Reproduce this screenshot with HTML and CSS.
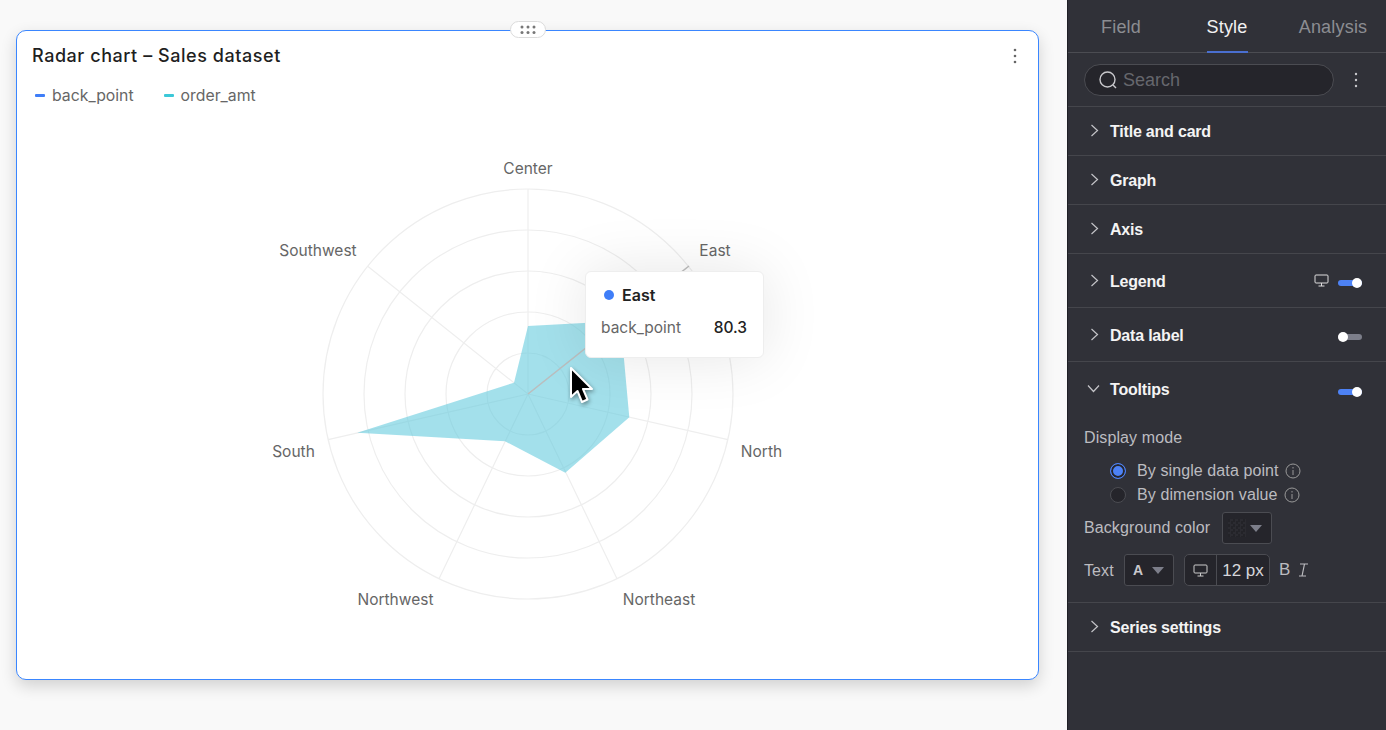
FILE: index.html
```html
<!DOCTYPE html>
<html lang="en">
<head>
<meta charset="utf-8">
<title>Radar chart</title>
<link rel="stylesheet" href="styles.css">
</head>
<body>
<main class="canvas">
  <section class="card">
    <div class="handle"><svg width="16" height="10" viewBox="0 0 16 10"><g fill="#777"><circle cx="2" cy="2" r="1.5"/><circle cx="8" cy="2" r="1.5"/><circle cx="14" cy="2" r="1.5"/><circle cx="2" cy="7.500" r="1.5"/><circle cx="8" cy="7.500" r="1.5"/><circle cx="14" cy="7.500" r="1.5"/></g></svg></div>
    <header class="card-head">
      <h1 class="card-title">Radar chart – Sales dataset</h1>
      <svg class="kebab" width="4" height="16" viewBox="0 0 4 16"><g fill="#666"><circle cx="2" cy="2" r="1.3"/><circle cx="2" cy="8" r="1.3"/><circle cx="2" cy="14" r="1.3"/></g></svg>
    </header>
    <div class="legend">
      <span class="legend-item"><i class="dash dash-blue"></i>back_point</span>
      <span class="legend-item"><i class="dash dash-cyan"></i>order_amt</span>
    </div>
    <svg class="radar" width="1021" height="569" viewBox="17 110 1021 569">
      <g fill="none" stroke="#eeeeee" stroke-width="1.2">
        <circle cx="528" cy="394" r="41"/>
        <circle cx="528" cy="394" r="82"/>
        <circle cx="528" cy="394" r="123"/>
        <circle cx="528" cy="394" r="164"/>
        <circle cx="528" cy="394" r="205"/>
        <path d="M528 394V189M528 394L688.3 266.2M528 394L727.9 439.6M528 394L617 578.7M528 394L439 578.7M528 394L328.1 439.6M528 394L367.7 266.2"/>
      </g>
      <polygon class="area" points="528,326 620.5,321 629.3,417.3 565.3,472.7 505,441.3 357.3,432.7 514,382.7"/>
      <path d="M528 394L689 266" stroke="#bdbdbd" stroke-width="1.4" fill="none"/>
      <g class="axis-label" text-anchor="middle">
        <text x="528" y="174">Center</text>
        <text x="715" y="256">East</text>
        <text x="761.500" y="456.500">North</text>
        <text x="659" y="604.500">Northeast</text>
        <text x="395.500" y="604.500">Northwest</text>
        <text x="293.500" y="456.500">South</text>
        <text x="318" y="256">Southwest</text>
      </g>
    </svg>
    <div class="tooltip">
      <div class="tip-head"><i class="tip-dot"></i>East</div>
      <div class="tip-row"><span>back_point</span><b>80.3</b></div>
    </div>
    <svg class="cursor" width="28" height="40" viewBox="0 0 28 40"><path d="M3 2V31L9.500 25L14 36L19.500 33.500L15 23H24Z" fill="#000" stroke="#fff" stroke-width="2" stroke-linejoin="round"/></svg>
  </section>
</main>
<aside class="panel">
  <nav class="tabs">
    <span class="tab">Field</span>
    <span class="tab tab-on">Style</span>
    <span class="tab">Analysis</span>
  </nav>
  <div class="search-row">
    <div class="search">
      <svg width="20" height="20" viewBox="0 0 20 20" fill="none" stroke="#c8c8cc" stroke-width="1.4"><circle cx="9.500" cy="9.500" r="7.500"/><path d="M15 15L18 18"/></svg>
      <span class="search-text">Search</span>
    </div>
    <svg width="4" height="16" viewBox="0 0 4 16"><g fill="#c8c8cc"><circle cx="2" cy="2" r="1.2"/><circle cx="2" cy="8" r="1.2"/><circle cx="2" cy="14" r="1.200"/></g></svg>
  </div>
  <div class="row"><svg class="chev" width="9" height="13" viewBox="0 0 9 13"><path d="M1.500 1L7.500 6.500L1.500 12"/></svg><span class="row-title">Title and card</span></div>
  <div class="row"><svg class="chev" width="9" height="13" viewBox="0 0 9 13"><path d="M1.500 1L7.500 6.500L1.500 12"/></svg><span class="row-title">Graph</span></div>
  <div class="row"><svg class="chev" width="9" height="13" viewBox="0 0 9 13"><path d="M1.500 1L7.500 6.500L1.500 12"/></svg><span class="row-title">Axis</span></div>
  <div class="row row-tall"><svg class="chev" width="9" height="13" viewBox="0 0 9 13"><path d="M1.500 1L7.500 6.500L1.500 12"/></svg><span class="row-title">Legend</span>
    <svg class="monitor" width="15" height="13" viewBox="0 0 15 13" fill="none" stroke="#ddd" stroke-width="1"><rect x="1" y="1" width="13" height="8" rx="1"/><path d="M7.500 9V12M4.500 12H10.500"/></svg>
    <span class="toggle toggle-on"></span></div>
  <div class="row row-tall"><svg class="chev" width="9" height="13" viewBox="0 0 9 13"><path d="M1.500 1L7.500 6.500L1.500 12"/></svg><span class="row-title">Data label</span><span class="toggle toggle-off"></span></div>
  <div class="group">
    <div class="row-open"><svg class="chev chev-down" width="13" height="9" viewBox="0 0 13 9"><path d="M1 1.500L6.500 7.500L12 1.500"/></svg><span class="row-title">Tooltips</span><span class="toggle toggle-on"></span></div>
    <div class="group-body">
      <div class="field-label">Display mode</div>
      <div class="radios">
        <div class="radio-row"><i class="radio radio-on"></i>By single data point<svg class="info" width="16" height="16" viewBox="0 0 16 16" fill="none" stroke="#999" stroke-width="1"><circle cx="8" cy="8" r="7"/><path d="M8 7V12M8 4V5.500"/></svg></div>
        <div class="radio-row"><i class="radio"></i>By dimension value<svg class="info" width="16" height="16" viewBox="0 0 16 16" fill="none" stroke="#999" stroke-width="1"><circle cx="8" cy="8" r="7"/><path d="M8 7V12M8 4V5.500"/></svg></div>
      </div>
      <div class="bg-row"><span class="field-label">Background color</span><span class="select select-bg"><i class="swatch"></i><i class="caret"></i></span></div>
      <div class="text-row">
        <span class="field-label">Text</span>
        <span class="select select-text"><b class="a-glyph">A</b><i class="caret"></i></span>
        <span class="size-box"><span class="size-icon"><svg width="15" height="13" viewBox="0 0 15 13" fill="none" stroke="#ccc" stroke-width="1"><rect x="1" y="1" width="13" height="8" rx="1"/><path d="M7.500 9V12M4.500 12H10.500"/></svg></span><span class="size-val">12 px</span></span>
        <span class="fmt fmt-b">B</span>
        <svg class="fmt-i" width="11" height="14" viewBox="0 0 11 14" fill="none" stroke="#bcbcc0" stroke-width="1.200"><path d="M2 1H10M1 13H8M6.500 1L4 13"/></svg>
      </div>
    </div>
  </div>
  <div class="row"><svg class="chev" width="9" height="13" viewBox="0 0 9 13"><path d="M1.500 1L7.500 6.500L1.500 12"/></svg><span class="row-title">Series settings</span></div>
</aside>
</body>
</html>
```
FILE: styles.css
```css
* { box-sizing: border-box; }
html, body { height: 100%; }
body {
  margin: 0;
  display: flex;
  height: 730px;
  overflow: hidden;
  background: #f9f9f9;
  font-family: Inter, "Liberation Sans", sans-serif;
}
.canvas { width: 1067px; flex: none; padding: 30px 28px 50px 16px; }
.card {
  position: relative;
  height: 650px;
  background: #fff;
  border: 1px solid #3a86ff;
  border-radius: 10px;
  box-shadow: 0 6px 16px rgba(0, 0, 0, .16);
}
.handle {
  position: absolute;
  left: 493px;
  top: -10px;
  width: 36px;
  height: 17px;
  display: flex;
  align-items: center;
  justify-content: center;
  background: #fff;
  border: 1px solid #dcdcdc;
  border-radius: 9px;
}
.card-head {
  height: 49px;
  padding: 0 21px 0 15px;
  display: flex;
  align-items: center;
  justify-content: space-between;
}
.card-title { margin: 0; font-size: 18px; font-weight: 500; letter-spacing: .55px; color: #1f1f1f; }
.kebab { display: block; }
.legend { height: 30px; padding-left: 18px; display: flex; align-items: center; gap: 30px; }
.legend-item { display: flex; align-items: center; gap: 7px; font-size: 15.800px; color: #666; }
.dash { width: 10px; height: 3px; border-radius: 1px; }
.dash-blue { background: #3f7ef8; }
.dash-cyan { background: #3cc8d8; }
.radar { display: block; }
.area { fill: #61c9dc; fill-opacity: .58; }
.axis-label { font-size: 15.500px; fill: #666; }
.tooltip {
  position: absolute;
  left: 568px;
  top: 240px;
  width: 179px;
  height: 87px;
  padding: 12px 16px 0 15px;
  background: #fff;
  border: 1px solid #eee;
  border-radius: 6px;
  box-shadow: 0 0 60px rgba(0, 0, 0, .1);
}
.tip-head { display: flex; align-items: center; height: 22px; padding-left: 3px; gap: 8px; font-size: 16px; font-weight: 600; color: #222; }
.tip-dot { width: 10px; height: 10px; border-radius: 50%; background: #3f7ef8; }
.tip-row { display: flex; justify-content: space-between; align-items: center; height: 22px; margin-top: 10px; font-size: 15.500px; color: #666; }
.tip-row b { font-weight: 500; color: #222; }
.cursor { position: absolute; left: 551px; top: 335px; filter: drop-shadow(1px 2px 2px rgba(0, 0, 0, .4)); }

.panel {
  width: 319px;
  flex: none;
  height: 730px;
  background: #303138;
  border-left: 1px solid #1f2026;
  font-family: "Liberation Sans", Arial, sans-serif;
}
.tabs { display: flex; height: 53px; border-bottom: 1px solid #4b4c52; }
.tab {
  flex: 1;
  display: flex;
  align-items: center;
  justify-content: center;
  padding-top: 2px;
  font-size: 18px;
  letter-spacing: .2px;
  color: #8c8d92;
  position: relative;
}
.tab-on { color: #f2f2f2; }
.tab-on::after {
  content: "";
  position: absolute;
  left: 33px;
  width: 41px;
  bottom: -1px;
  height: 2px;
  background: #4a6fd0;
}
.search-row {
  height: 54px;
  padding: 0 28px 0 16px;
  display: flex;
  align-items: center;
  justify-content: space-between;
  border-bottom: 1px solid #45464c;
}
.search {
  width: 250px;
  height: 32px;
  display: flex;
  align-items: center;
  gap: 5px;
  padding-left: 13px;
  background: #25252b;
  border: 1px solid #4b4c52;
  border-radius: 16px;
  font-size: 18px;
  color: #66676d;
}
.search-text { padding-top: 2px; }
.row, .row-open {
  display: flex;
  align-items: center;
  height: 49px;
  padding: 0 24px 0 22px;
  border-bottom: 1px solid #45464c;
}
.row-tall { height: 54px; }
.row-open { height: 54px; border-bottom: 0; padding-left: 19px; }
.chev { flex: none; fill: none; stroke: #c4c4c8; stroke-width: 1.200; margin-top: -1px; }
.row-title { margin-left: 11px; flex: 1; padding-top: 2px; font-size: 16px; letter-spacing: -.2px; font-weight: 700; color: #f4f4f4; }
.row-open .row-title { margin-left: 10px; }
.monitor { margin-right: 9px; }
.toggle { position: relative; width: 24px; height: 6px; border-radius: 3px; margin-top: 5px; }
.toggle::after {
  content: "";
  position: absolute;
  top: -2px;
  width: 10px;
  height: 10px;
  border-radius: 50%;
  background: #fff;
}
.toggle-on { background: #4d82f5; }
.toggle-on::after { right: 0; }
.toggle-off { background: #7c7e8a; }
.toggle-off::after { left: 0; }
.group { border-bottom: 1px solid #45464c; }
.group-body { padding: 9px 0 16px 16px; }
.field-label { height: 24px; line-height: 26px; font-size: 16px; letter-spacing: .1px; color: #bcbcc0; }
.radios { margin-top: 9px; padding-left: 26px; }
.radio-row { display: flex; align-items: center; height: 24px; padding-top: 1px; font-size: 16px; letter-spacing: .1px; color: #bcbcc0; }
.radio {
  width: 16px;
  height: 16px;
  margin-right: 11px;
  border: 1px solid #4b4c52;
  border-radius: 50%;
  background: #25252b;
}
.radio-on { border-color: #4d82f5; background: #4d82f5; box-shadow: inset 0 0 0 2px #25252b; }
.info { margin-left: 6px; }
.bg-row { display: flex; align-items: center; margin-top: 6px; height: 32px; gap: 12px; }
.bg-row .field-label { line-height: 24px; }
.select {
  position: relative;
  display: flex;
  align-items: center;
  width: 50px;
  height: 32px;
  background: #25252b;
  border: 1px solid #4b4c52;
  border-radius: 3px;
}
.swatch {
  width: 18px;
  height: 18px;
  margin-left: 5px;
  background: repeating-conic-gradient(#2b2b31 0 25%, #232328 0 50%) 0 0 / 5px 5px;
}
.caret {
  position: absolute;
  right: 9px;
  top: 12px;
  width: 0;
  height: 0;
  border-left: 6px solid transparent;
  border-right: 6px solid transparent;
  border-top: 7px solid #7c7e8a;
}
.text-row { display: flex; align-items: center; height: 32px; margin-top: 10px; }
.text-row .field-label { width: 40px; }
.a-glyph { margin-left: 8px; font-size: 14px; color: #c8c8cc; }
.size-box {
  display: flex;
  width: 86px;
  height: 32px;
  margin-left: 10px;
  border: 1px solid #4b4c52;
  border-radius: 5px;
  background: #25252b;
}
.size-icon { width: 32px; display: flex; align-items: center; justify-content: center; border-right: 1px solid #4b4c52; }
.size-val { flex: 1; display: flex; align-items: center; justify-content: center; padding-top: 2px; font-size: 17px; color: #d6d6da; white-space: nowrap; }
.fmt { font-size: 17px; color: #bcbcc0; }
.fmt-b { margin-left: 9px; }
.fmt-i { margin-left: 8px; }
```
